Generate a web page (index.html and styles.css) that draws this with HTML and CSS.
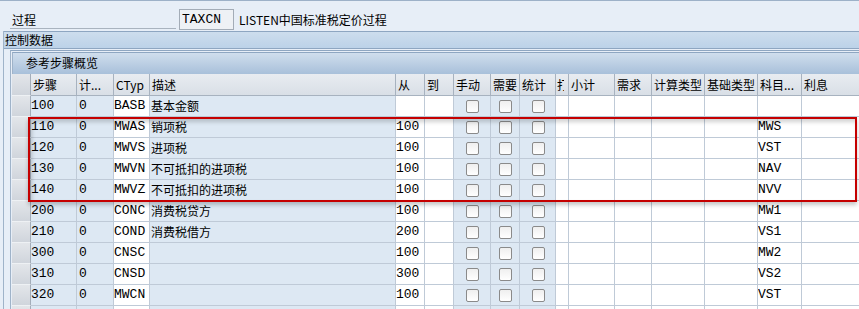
FILE: index.html
```html
<!DOCTYPE html>
<html>
<head>
<meta charset="utf-8">
<link rel="stylesheet" href="styles.css">
</head>
<body>
<div class="page">
  <div class="top">
    <div class="label">过程</div>
    <div class="input">TAXCN</div>
    <div class="desc">LISTEN中国标准税定价过程</div>
  </div>
  <div class="frame">
    <div class="frame-title">控制数据</div>
    <div class="inner">
      <div class="inner-title">参考步骤概览</div>
      <div class="grid">
        <div class="h sel"></div><div class="h">步骤</div><div class="h">计...</div><div class="h">CTyp</div><div class="h">描述</div><div class="h">从</div><div class="h">到</div><div class="h">手动</div><div class="h">需要</div><div class="h">统计</div><div class="h clip"><span>打</span></div><div class="h">小计</div><div class="h">需求</div><div class="h">计算类型</div><div class="h">基础类型</div><div class="h">科目...</div><div class="h">利息</div>

        <div class="c sel"></div><div class="c b m">100</div><div class="c b m n">0</div><div class="c w m">BASB</div><div class="c b">基本金额</div><div class="c w m"></div><div class="c w"></div><div class="c b k"><i></i></div><div class="c b k"><i></i></div><div class="c b k"><i></i></div><div class="c w"></div><div class="c w"></div><div class="c w"></div><div class="c w"></div><div class="c w"></div><div class="c w m"></div><div class="c w"></div>

        <div class="c sel"></div><div class="c b m">110</div><div class="c b m n">0</div><div class="c w m">MWAS</div><div class="c b">销项税</div><div class="c w m">100</div><div class="c w"></div><div class="c b k"><i></i></div><div class="c b k"><i></i></div><div class="c b k"><i></i></div><div class="c w"></div><div class="c w"></div><div class="c w"></div><div class="c w"></div><div class="c w"></div><div class="c w m">MWS</div><div class="c w"></div>

        <div class="c sel"></div><div class="c b m">120</div><div class="c b m n">0</div><div class="c w m">MWVS</div><div class="c b">进项税</div><div class="c w m">100</div><div class="c w"></div><div class="c b k"><i></i></div><div class="c b k"><i></i></div><div class="c b k"><i></i></div><div class="c w"></div><div class="c w"></div><div class="c w"></div><div class="c w"></div><div class="c w"></div><div class="c w m">VST</div><div class="c w"></div>

        <div class="c sel"></div><div class="c b m">130</div><div class="c b m n">0</div><div class="c w m">MWVN</div><div class="c b">不可抵扣的进项税</div><div class="c w m">100</div><div class="c w"></div><div class="c b k"><i></i></div><div class="c b k"><i></i></div><div class="c b k"><i></i></div><div class="c w"></div><div class="c w"></div><div class="c w"></div><div class="c w"></div><div class="c w"></div><div class="c w m">NAV</div><div class="c w"></div>

        <div class="c sel"></div><div class="c b m">140</div><div class="c b m n">0</div><div class="c w m">MWVZ</div><div class="c b">不可抵扣的进项税</div><div class="c w m">100</div><div class="c w"></div><div class="c b k"><i></i></div><div class="c b k"><i></i></div><div class="c b k"><i></i></div><div class="c w"></div><div class="c w"></div><div class="c w"></div><div class="c w"></div><div class="c w"></div><div class="c w m">NVV</div><div class="c w"></div>

        <div class="c sel"></div><div class="c b m">200</div><div class="c b m n">0</div><div class="c w m">CONC</div><div class="c b">消费税贷方</div><div class="c w m">100</div><div class="c w"></div><div class="c b k"><i></i></div><div class="c b k"><i></i></div><div class="c b k"><i></i></div><div class="c w"></div><div class="c w"></div><div class="c w"></div><div class="c w"></div><div class="c w"></div><div class="c w m">MW1</div><div class="c w"></div>

        <div class="c sel"></div><div class="c b m">210</div><div class="c b m n">0</div><div class="c w m">COND</div><div class="c b">消费税借方</div><div class="c w m">200</div><div class="c w"></div><div class="c b k"><i></i></div><div class="c b k"><i></i></div><div class="c b k"><i></i></div><div class="c w"></div><div class="c w"></div><div class="c w"></div><div class="c w"></div><div class="c w"></div><div class="c w m">VS1</div><div class="c w"></div>

        <div class="c sel"></div><div class="c b m">300</div><div class="c b m n">0</div><div class="c w m">CNSC</div><div class="c b"></div><div class="c w m">100</div><div class="c w"></div><div class="c b k"><i></i></div><div class="c b k"><i></i></div><div class="c b k"><i></i></div><div class="c w"></div><div class="c w"></div><div class="c w"></div><div class="c w"></div><div class="c w"></div><div class="c w m">MW2</div><div class="c w"></div>

        <div class="c sel"></div><div class="c b m">310</div><div class="c b m n">0</div><div class="c w m">CNSD</div><div class="c b"></div><div class="c w m">300</div><div class="c w"></div><div class="c b k"><i></i></div><div class="c b k"><i></i></div><div class="c b k"><i></i></div><div class="c w"></div><div class="c w"></div><div class="c w"></div><div class="c w"></div><div class="c w"></div><div class="c w m">VS2</div><div class="c w"></div>

        <div class="c sel"></div><div class="c b m">320</div><div class="c b m n">0</div><div class="c w m">MWCN</div><div class="c b"></div><div class="c w m">100</div><div class="c w"></div><div class="c b k"><i></i></div><div class="c b k"><i></i></div><div class="c b k"><i></i></div><div class="c w"></div><div class="c w"></div><div class="c w"></div><div class="c w"></div><div class="c w"></div><div class="c w m">VST</div><div class="c w"></div>

        <div class="c sel"></div><div class="c b"></div><div class="c b"></div><div class="c w"></div><div class="c b"></div><div class="c w"></div><div class="c w"></div><div class="c b"></div><div class="c b"></div><div class="c b"></div><div class="c w"></div><div class="c w"></div><div class="c w"></div><div class="c w"></div><div class="c w"></div><div class="c w"></div><div class="c w"></div>
      </div>
    </div>
  </div>
  <div class="highlight"></div>
</div>
</body>
</html>
```
FILE: styles.css
```css
html, body {
  margin: 0;
  padding: 0;
  background: #e7eef7;
  overflow: hidden;
}
body {
  width: 859px;
  height: 309px;
  font-family: "Noto Sans CJK SC", "Liberation Sans", sans-serif;
  font-size: 12px;
  color: #000;
}
.page {
  position: relative;
  width: 859px;
  height: 309px;
  overflow: hidden;
}
.top {
  border-top: 1px solid #9db1c8;
  display: flex;
  align-items: flex-start;
  box-sizing: border-box;
  height: 31px;
}
.label {
  margin-left: 10px;
  width: 166px;
  padding-left: 2px;
  margin-top: 10px;
  line-height: 17px;
  border-bottom: 1px solid #a9b3bf;
  box-sizing: border-box;
  height: 18px;
}
.input {
  margin-left: 3px;
  margin-top: 8px;
  width: 55px;
  height: 21px;
  box-sizing: border-box;
  border: 1px solid #a3acb7;
  background: #eef1f5;
  font-family: "Liberation Mono", monospace;
  font-size: 13px;
  line-height: 19px;
  padding-left: 2px;
}
.desc {
  margin-left: 5px;
  margin-top: 9px;
  line-height: 19px;
  font-family: "Noto Sans CJK SC", sans-serif;
  font-size: 12px;
}
.frame {
  margin-left: 3px;
  border-left: 1px solid #9fb3c9;
}
.frame-title {
  height: 18px;
  box-sizing: border-box;
  border-top: 1px solid #8ea6c1;
  border-bottom: 1px solid #8ea6c1;
  background: linear-gradient(#cddded, #bcd2e8);
  padding-left: 1px;
  line-height: 16px;
}
.inner {
  margin-top: 1px;
  margin-left: 6px;
  border-top: 1px solid #8ea6c1;
  border-left: 1px solid #9fb3c9;
  padding-top: 1px;
  padding-left: 1px;
}
.inner-title {
  height: 22px;
  box-sizing: border-box;
  border-top: 1px solid #8ea6c1;
  border-left: 1px solid #9fb3c9;
  background: linear-gradient(#d0deed, #a8c0da);
  padding-left: 13px;
  line-height: 20px;
}
.grid {
  display: grid;
  grid-template-columns: 19px 46px 37px 36px 246px 29px 29px 37px 29px 36px 13px 46px 37px 53px 53px 44px 60px;
  grid-template-rows: 22px;
  grid-auto-rows: 21px;
}
.h, .c {
  box-sizing: border-box;
  border-right: 1px solid #bfcad7;
  border-bottom: 1px solid #bfcad7;
  white-space: nowrap;
  overflow: hidden;
}
.h {
  background: linear-gradient(#e8ecf1, #d9dfe6);
  border-right: 1px solid #a7b2bf;
  border-bottom: 1px solid #a7b2bf;
  padding-left: 2px;
  line-height: 21px;
}
.clip {
  padding-left: 1px;
}
.clip span {
  display: inline-block;
  width: 7px;
  overflow: hidden;
  vertical-align: top;
}
.c {
  line-height: 20px;
  padding-left: 1px;
}
.sel {
  background: linear-gradient(#e3e6ea, #d0d5dc);
  border-right: 1px solid #a3adb9;
  border-bottom: 1px solid #eef1f4;
  padding: 0;
}
.b { background: #dde8f3; }
.w { background: #ffffff; }
.m {
  font-family: "Liberation Mono", monospace;
  font-size: 13px;
  padding-left: 0;
}
.n { padding-left: 2px; }
.k {
  display: flex;
  align-items: center;
  justify-content: center;
}
.k i {
  display: block;
  width: 13px;
  height: 13px;
  box-sizing: border-box;
  border: 1px solid #8a8a8a;
  border-radius: 2px;
  background: linear-gradient(#efefef, #ffffff);
}
.highlight {
  position: absolute;
  left: 28px;
  top: 117px;
  width: 829px;
  height: 85px;
  box-sizing: border-box;
  border: 2px solid #c50000;
  box-shadow: 0 3px 4px rgba(0, 0, 0, 0.22), inset 2px 3px 4px rgba(0, 0, 0, 0.18);
}
```
